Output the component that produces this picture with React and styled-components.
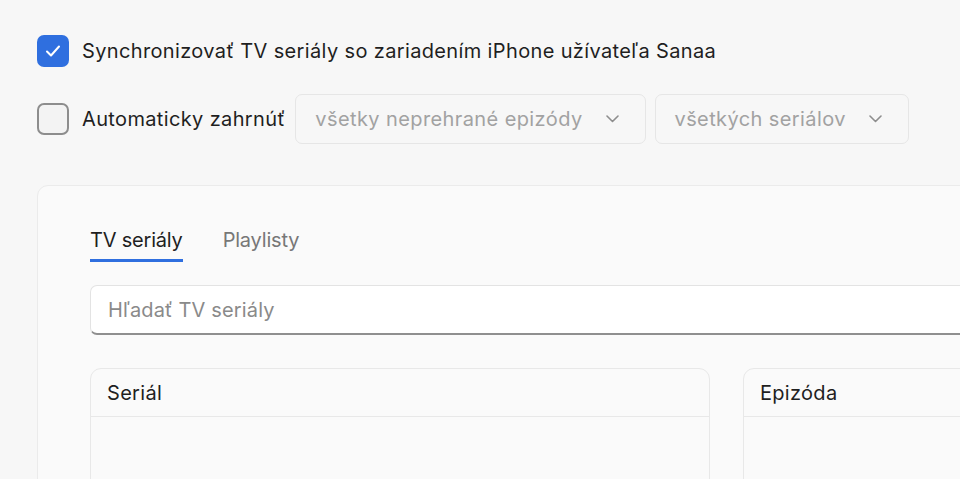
import React from "react";
import styled, { createGlobalStyle } from "styled-components";

const Global = createGlobalStyle`
  html, body { margin: 0; padding: 0; background: #f7f7f7; overflow: hidden; }
  body { font-family: Inter, "Noto Sans", "Liberation Sans", sans-serif; color: #1f1f1f; }
  * { box-sizing: border-box; }
`;

const Page = styled.div`
  width: 960px;
  height: 479px;
  overflow: hidden;
  padding: 35px 0 0 37px;
  display: flex;
  flex-direction: column;
`;

const Row = styled.div`
  display: flex;
  align-items: center;
  height: ${(p) => p.$h}px;
  margin-bottom: ${(p) => p.$mb || 0}px;
`;

const Box = styled.div`
  width: 32px;
  height: 32px;
  border-radius: 7px;
  flex: none;
  display: flex;
  align-items: center;
  justify-content: center;
  background: ${(p) => (p.$checked ? "#2f6fdf" : "#f3f3f3")};
  border: ${(p) => (p.$checked ? "none" : "2px solid #8d8d8d")};
`;

const Label = styled.span`
  font-size: 20px;
  margin-left: 13px;
  margin-right: 10px;
  white-space: nowrap;
  letter-spacing: 0.36px;
`;

const Select = styled.div`
  height: 50px;
  display: flex;
  align-items: center;
  gap: 23px;
  padding: 0 26px 0 19px;
  border: 1px solid #e6e6e6;
  border-radius: 7px;
  color: #a2a2a2;
  font-size: 20px;
  white-space: nowrap;
  margin-right: 9px;
  letter-spacing: 0.4px;
`;

const Panel = styled.div`
  width: 1400px;
  flex: 1;
  margin-top: 41px;
  background: #fafafa;
  border: 1px solid #ebebeb;
  border-radius: 11px;
  padding: 42px 0 0 52px;
`;

const Tabs = styled.div`
  display: flex;
  gap: 40px;
`;

const Tab = styled.div`
  font-size: 20px;
  line-height: 24px;
  padding-bottom: 7px;
  color: ${(p) => (p.$active ? "#1f1f1f" : "#777")};
  border-bottom: 3px solid ${(p) => (p.$active ? "#2f6fdf" : "transparent")};
  letter-spacing: -0.2px;
`;

const Search = styled.div`
  margin-top: 23px;
  height: 50px;
  width: 1300px;
  background: #fff;
  border: 1px solid #e3e3e3;
  border-bottom: 2px solid #8f8f8f;
  border-radius: 7px;
  display: flex;
  align-items: center;
  padding-left: 17px;
  font-size: 20px;
  color: #8a8a8a;
  letter-spacing: 0.15px;
`;

const Tables = styled.div`
  margin-top: 33px;
  display: flex;
  gap: 33px;
`;

const Table = styled.div`
  width: 620px;
  height: 200px;
  border: 1px solid #e8e8e8;
  border-radius: 11px;
  background: #fafafa;
`;

const TableHead = styled.div`
  height: 48px;
  border-bottom: 1px solid #e8e8e8;
  display: flex;
  align-items: center;
  padding-left: 16px;
  font-size: 20px;
  color: #1f1f1f;
  letter-spacing: 0.3px;
`;

const Check = () => (
  <svg width="16" height="14" viewBox="0 0 16 14" fill="none">
    <path d="M2 7.5 L6 11.5 L14 2.5" stroke="#fff" strokeWidth="2" strokeLinecap="round" strokeLinejoin="round" />
  </svg>
);

const Chevron = () => (
  <svg width="13" height="8" viewBox="0 0 13 8" fill="none">
    <path d="M1 1 L6.5 6.5 L12 1" stroke="#8e8e8e" strokeWidth="1.6" strokeLinecap="round" strokeLinejoin="round" />
  </svg>
);

export default function App() {
  return (
    <>
      <Global />
      <Page>
        <Row $h={32} $mb={27}>
          <Box $checked>
            <Check />
          </Box>
          <Label>Synchronizovať TV seriály so zariadením iPhone užívateľa Sanaa</Label>
        </Row>
        <Row $h={50}>
          <Box />
          <Label>Automaticky zahrnúť</Label>
          <Select>
            všetky neprehrané epizódy
            <Chevron />
          </Select>
          <Select>
            všetkých seriálov
            <Chevron />
          </Select>
        </Row>
        <Panel>
          <Tabs>
            <Tab $active>TV seriály</Tab>
            <Tab>Playlisty</Tab>
          </Tabs>
          <Search>Hľadať TV seriály</Search>
          <Tables>
            <Table>
              <TableHead>Seriál</TableHead>
            </Table>
            <Table>
              <TableHead>Epizóda</TableHead>
            </Table>
          </Tables>
        </Panel>
      </Page>
    </>
  );
}
